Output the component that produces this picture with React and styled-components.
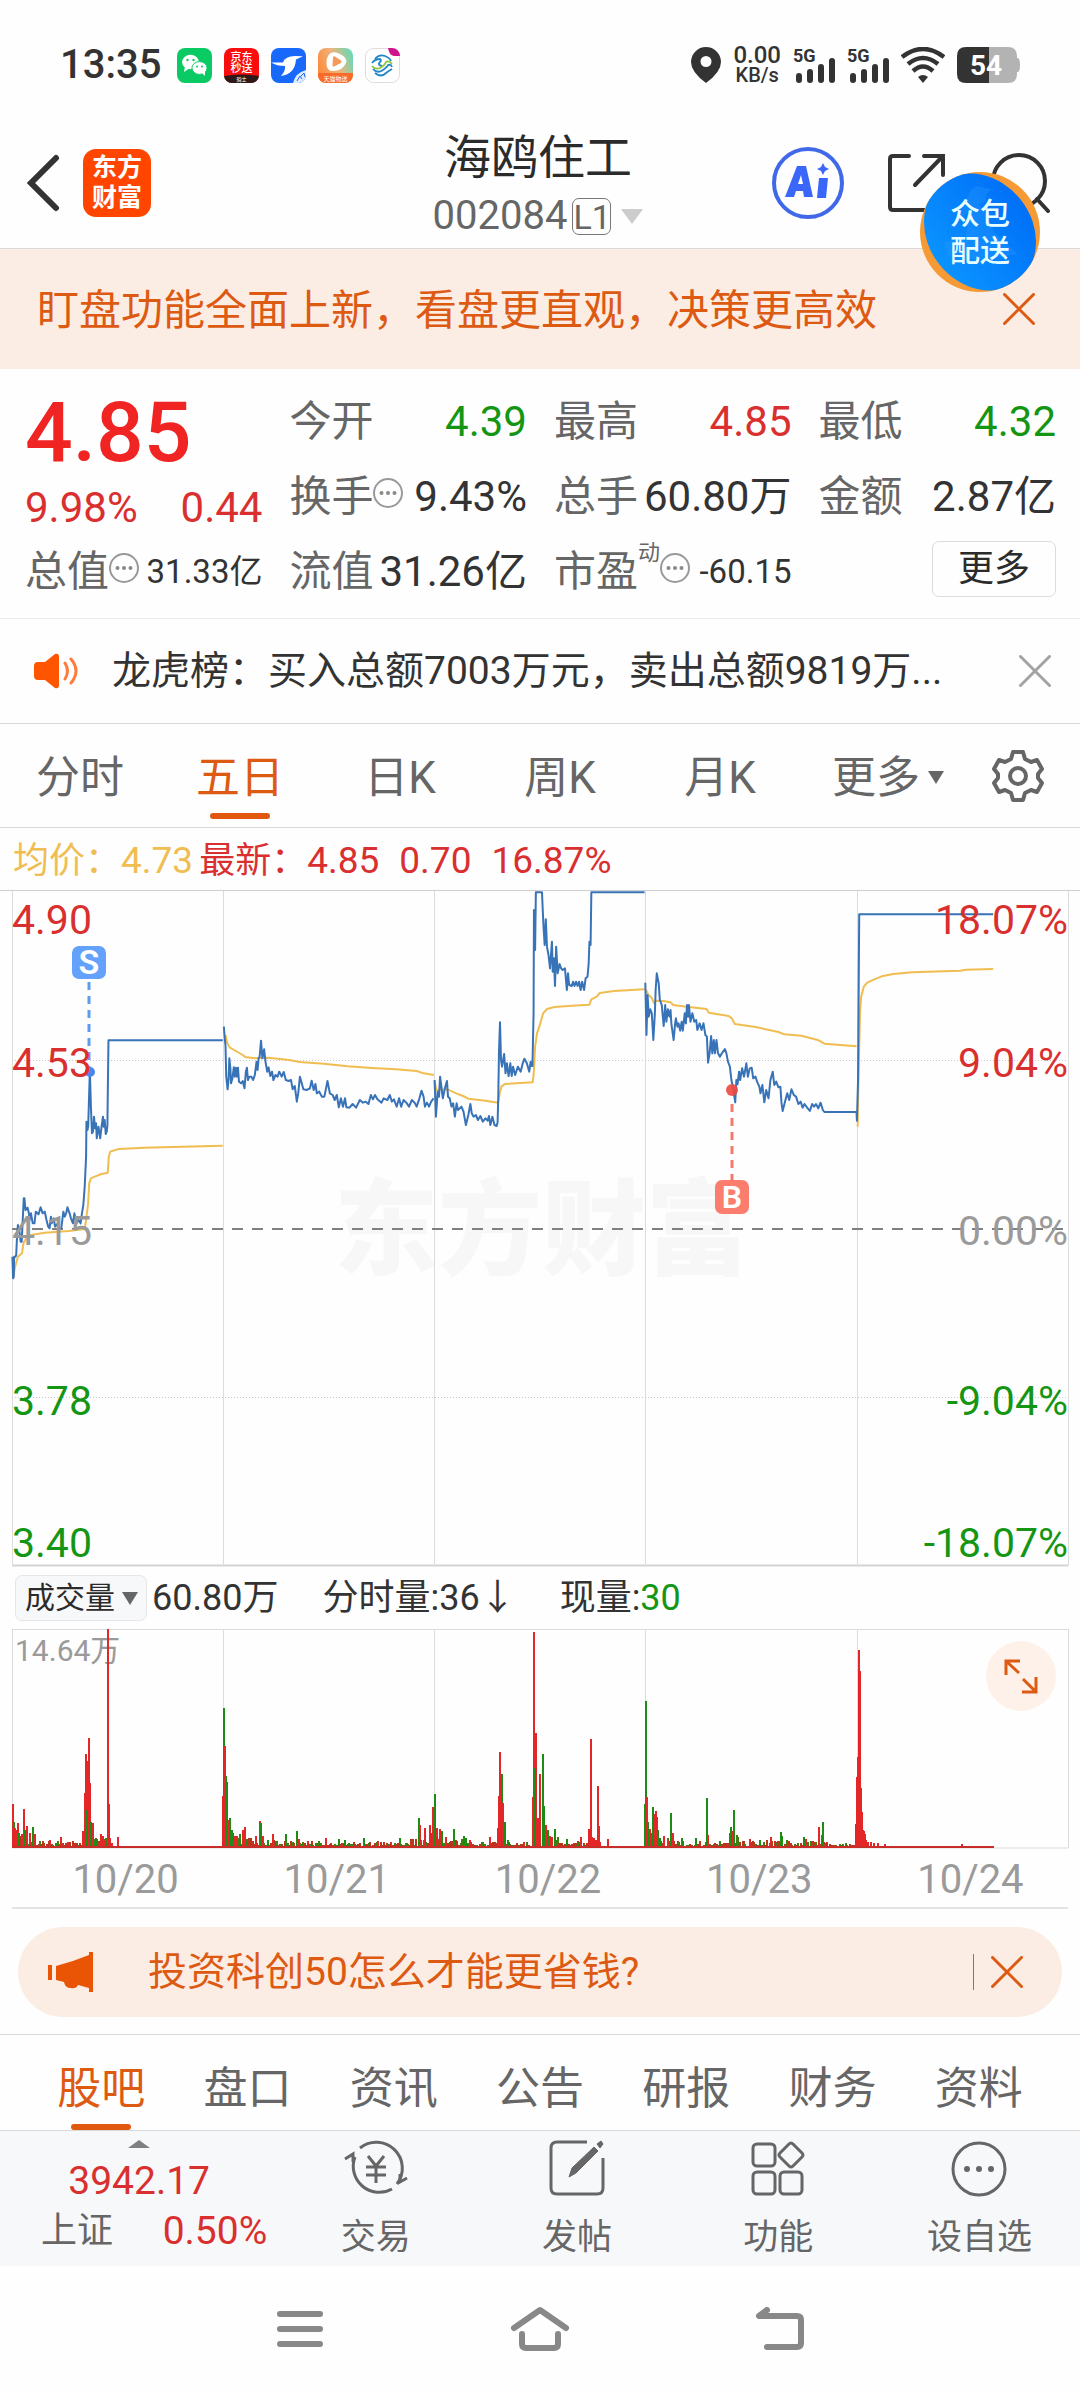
import React from "react";
import styled, { createGlobalStyle } from "styled-components";

const color = {
  ink: "#2b2b2b",
  text: "#333333",
  label: "#666666",
  muted: "#9a9a9a",
  line: "#d9d9d9",
  red: "#d9302f",
  hotRed: "#f12424",
  green: "#149614",
  orange: "#dd5a12",
  peach: "#fcede4",
  gold: "#f0bd50",
  blue: "#3873b8",
};

const tones = { red: color.red, green: color.green, dark: color.text, gold: color.gold };

const GlobalStyle = createGlobalStyle`
  *, *::before, *::after { box-sizing: border-box; }
  body {
    margin: 0;
    background: #fefefe;
    color: ${color.text};
    font-family: Roboto, "Noto Sans CJK SC", sans-serif;
  }
  button, select {
    font: inherit;
    color: inherit;
    background: none;
    border: 0;
    padding: 0;
    margin: 0;
    cursor: pointer;
  }
  a { color: inherit; text-decoration: none; }
  dl, dt, dd, h1, p { margin: 0; font-weight: 400; }
  svg { display: block; }
`;

/* ---------- status bar ---------- */

const StatusBar = styled.div`
  display: flex;
  align-items: center;
  height: 122px;
  padding: 8px 60px 0 60px;
`;

const Clock = styled.time`
  font-size: 40px;
  line-height: 48px;
  font-weight: 500;
  margin-right: 16px;
`;

const AppIcons = styled.div`
  display: flex;
  gap: 12px;
  flex: 1;
`;

const StatusRight = styled.div`
  display: flex;
  align-items: center;
  gap: 12px;
`;

const NetSpeed = styled.div`
  display: flex;
  flex-direction: column;
  align-items: center;
  font-size: 24px;
  line-height: 20px;
  font-weight: 500;
  span + span { font-size: 20px; }
`;

/* ---------- header ---------- */

const Header = styled.header`
  position: relative;
  display: grid;
  grid-template-columns: 1fr auto 1fr;
  align-items: center;
  height: 127px;
  padding: 0 30px 10px 26px;
  border-bottom: 1px solid ${color.line};
`;

const HeaderLeft = styled.div`
  display: flex;
  align-items: center;
  gap: 23px;
`;

const HeaderRight = styled.div`
  display: flex;
  align-items: center;
  justify-content: flex-end;
  gap: 43px;
`;

const IconButton = styled.button`
  display: flex;
  align-items: center;
  justify-content: center;
`;

const Brand = styled.div`
  display: grid;
  place-content: center;
  width: 68px;
  height: 68px;
  border-radius: 13px;
  background: #ff4500;
  color: #fff;
  font-size: 25px;
  line-height: 30px;
  font-weight: 700;
  text-align: center;
`;

const TitleBlock = styled.div`
  align-self: start;
  padding-top: 6px;
  display: flex;
  flex-direction: column;
  align-items: center;
`;

const StockName = styled.h1`
  font-size: 47px;
  line-height: 60px;
  color: ${color.ink};
`;

const StockCode = styled.button`
  display: flex;
  align-items: center;
  font-size: 40px;
  line-height: 56px;
  color: ${color.label};
`;

const Level = styled.span`
  margin: 0 10px 0 5px;
  width: 39px;
  height: 37px;
  border: 1px solid #777;
  border-radius: 7px;
  font-size: 34px;
  line-height: 36px;
`;

const Caret = styled.span`
  width: 0;
  height: 0;
  border: ${(p) => p.$size}px solid transparent;
  border-bottom-width: 0;
  border-top: ${(p) => p.$rise}px solid ${(p) => p.$fill};
`;

const FloatingBadge = styled.button`
  position: absolute;
  top: 50px;
  right: 40px;
  z-index: 2;
  width: 120px;
  height: 120px;
  border-radius: 50%;
  background: #f59a35;
  display: grid;
  place-content: center;
  color: #e8ffff;
  font-size: 30px;
  line-height: 37px;
  font-weight: 500;
  overflow: hidden;
  svg { position: absolute; inset: 0; }
  span { position: relative; }
`;

/* ---------- notice banner ---------- */

const Notice = styled.aside`
  display: flex;
  align-items: center;
  justify-content: space-between;
  height: 120px;
  padding: 0 45px 0 37px;
  background: ${color.peach};
  color: ${color.orange};
  font-size: 42px;
  line-height: 60px;
  span { padding-top: 3px; }
`;

/* ---------- quote ---------- */

const Quote = styled.section`
  display: grid;
  grid-template-columns: minmax(0, 237fr) minmax(0, 765fr);
  column-gap: 27px;
  padding: 15px 24px 9px 25px;
  border-bottom: 1px solid #ececec;
`;

const PriceColumn = styled.div`
  display: flex;
  flex-direction: column;
`;

const Price = styled.strong`
  font-size: 84px;
  line-height: 98px;
  font-weight: 500;
  color: ${color.hotRed};
`;

const Change = styled.div`
  display: flex;
  justify-content: space-between;
  font-size: 42px;
  line-height: 52px;
  color: ${color.red};
`;

const StatGrid = styled.dl`
  display: grid;
  grid-template-columns: repeat(3, minmax(0, 1fr));
  grid-auto-rows: 75px;
  column-gap: 27px;
`;

const Stat = styled.div`
  display: flex;
  align-items: center;
  justify-content: space-between;
  height: 75px;
  white-space: nowrap;
  dt {
    display: flex;
    align-items: center;
    font-size: 42px;
    line-height: 60px;
    color: ${color.label};
  }
  dt svg { margin-bottom: 8px; }
`;

const StatValue = styled.dd`
  font-size: ${(p) => (p.$small ? 33 : 42)}px;
  line-height: 60px;
  color: ${(p) => tones[p.$tone || "dark"]};
`;

const Sup = styled.span`
  align-self: flex-start;
  font-size: 22px;
  line-height: 22px;
`;

const MoreCell = styled.div`
  display: flex;
  align-items: center;
  justify-content: flex-end;
`;

const MoreButton = styled.button`
  width: 124px;
  height: 56px;
  margin-bottom: 6px;
  border: 1px solid #dcdcdc;
  border-radius: 7px;
  font-size: 36px;
  line-height: 50px;
  color: ${color.ink};
`;

/* ---------- news ---------- */

const News = styled.section`
  display: flex;
  align-items: center;
  height: 105px;
  padding: 0 29px 0 33px;
  border-bottom: 1px solid ${color.line};
`;

const NewsLink = styled.a`
  flex: 1;
  padding-left: 33px;
  font-size: 39px;
  line-height: 56px;
  white-space: nowrap;
`;

/* ---------- tab rows ---------- */

const PeriodTabs = styled.nav`
  display: grid;
  grid-template-columns: repeat(5, 160fr) 176fr 84fr;
  height: 104px;
  padding-right: 20px;
  border-bottom: 1px solid ${color.line};
`;

const SectionTabs = styled.nav`
  display: grid;
  grid-template-columns: repeat(7, 1fr);
  height: 97px;
  padding: 0 28px;
  border-top: 1px solid ${color.line};
  border-bottom: 1px solid ${color.line};
`;

const Tab = styled.button`
  display: flex;
  align-items: center;
  justify-content: center;
  position: relative;
  gap: 8px;
  padding-top: ${(p) => p.$drop}px;
  font-size: 44px;
  line-height: 60px;
  color: ${(p) => (p.$active ? color.orange : color.label)};
  &::after {
    content: "";
    display: ${(p) => (p.$active ? "block" : "none")};
    position: absolute;
    bottom: ${(p) => p.$bar || 0}px;
    width: 60px;
    height: 6px;
    border-radius: 3px;
    background: #e0590f;
  }
`;

/* ---------- charts ---------- */

const Legend = styled.p`
  display: flex;
  align-items: center;
  height: 62px;
  padding: 4px 13px 0;
  font-size: 37px;
  line-height: 56px;
  small { font-size: 36px; }
`;

const LegendItem = styled.span`
  color: ${(p) => tones[p.$tone]};
  margin-right: ${(p) => p.$gap}px;
`;

const ChartBox = styled.div`
  position: relative;
  svg { width: 100%; }
`;

const AxisLabel = styled.span`
  position: absolute;
  top: ${(p) => p.$top}px;
  ${(p) => (p.$right ? "right: 12px;" : "left: 12px;")}
  font-size: 41px;
  line-height: 50px;
  color: ${(p) => p.$fill};
`;

const Watermark = styled.div`
  position: absolute;
  top: 282px;
  left: 4px;
  right: 0;
  z-index: -1;
  text-align: center;
  font-size: 104px;
  line-height: 120px;
  font-weight: 900;
  color: #f7f7f7;
`;

const VolumeBar = styled.div`
  display: flex;
  align-items: center;
  height: 62px;
  padding-left: 15px;
  font-size: 36px;
  line-height: 50px;
`;

const SelectWrap = styled.label`
  position: relative;
  display: flex;
  align-items: center;
  margin-right: 5px;
  ${Caret} {
    position: absolute;
    right: 9px;
    pointer-events: none;
  }
  select {
    appearance: none;
    width: 132px;
    height: 46px;
    padding: 0 32px 0 9px;
    border: 1px solid #e6e6e6;
    border-radius: 7px;
    background: #f7f8fa;
    font-size: 30px;
    line-height: 42px;
    color: ${color.ink};
  }
`;

const VolumeItem = styled.span`
  margin-right: ${(p) => p.$gap || 0}px;
  em { font-style: normal; color: ${color.green}; }
`;

const PeakLabel = styled.span`
  position: absolute;
  top: 2px;
  left: 15px;
  font-size: 30px;
  line-height: 40px;
  color: ${color.muted};
  z-index: -1;
`;

const ExpandButton = styled.button`
  position: absolute;
  top: 12px;
  right: 24px;
  width: 70px;
  height: 70px;
  border-radius: 50%;
  background: #fef1ea;
  display: grid;
  place-content: center;
  svg { width: 36px; }
`;

const Dates = styled.div`
  display: grid;
  grid-template-columns: repeat(5, 1fr);
  height: 60px;
  margin: 0 12px;
  border-bottom: 2px solid #e3e3e3;
  text-align: center;
  font-size: 40px;
  line-height: 62px;
  color: ${color.muted};
  span { padding-left: 16px; }
`;

/* ---------- promo ---------- */

const Promo = styled.aside`
  display: flex;
  align-items: center;
  height: 90px;
  margin: 18px 18px 17px;
  padding: 0 39px 0 30px;
  border-radius: 45px;
  background: ${color.peach};
  color: ${color.orange};
  a {
    flex: 1;
    padding-left: 54px;
    font-size: 39px;
    line-height: 56px;
  }
`;

const Divider = styled.span`
  width: 1px;
  height: 36px;
  margin-right: 17px;
  background: ${color.orange};
`;

/* ---------- bottom bars ---------- */

const BottomBar = styled.nav`
  display: grid;
  grid-template-columns: 275fr repeat(4, 201fr);
  height: 135px;
  background: #f7f8fa;
`;

const IndexCell = styled.button`
  display: flex;
  flex-direction: column;
  align-items: center;
  padding: 9px 8px 0 41px;
  font-size: 39px;
  line-height: 50px;
  color: ${color.red};
`;

const UpCaret = styled.span`
  width: 0;
  height: 0;
  margin-bottom: 8px;
  margin-right: 30px;
  border: 11px solid transparent;
  border-top-width: 0;
  border-bottom: 8px solid #808080;
`;

const IndexValue = styled.span`
  margin-right: 30px;
`;

const IndexRow = styled.span`
  display: flex;
  align-self: stretch;
  justify-content: space-between;
  small { font-size: 36px; color: ${color.label}; }
`;

const Action = styled.button`
  display: flex;
  flex-direction: column;
  align-items: center;
  padding-top: 9px;
  font-size: 35px;
  line-height: 48px;
  color: ${color.label};
  gap: 16px;
`;

const SystemNav = styled.nav`
  display: grid;
  grid-template-columns: repeat(3, 240px);
  justify-content: center;
  height: 126px;
`;

/* ---------- icons ---------- */

const Cross = ({ stroke, width = 3 }) => (
  <svg width="32" height="32" viewBox="0 0 32 32" fill="none" stroke={stroke} strokeWidth={width} strokeLinecap="round">
    <path d="M1.500 1.500 L30.500 30.500 M30.500 1.500 L1.500 30.500" />
  </svg>
);

const Dots = () => (
  <svg width="30" height="30" viewBox="0 0 30 30" fill="none" stroke="#999" strokeWidth="2">
    <circle cx="15" cy="15" r="14" />
    <g fill="#8a8a8a" stroke="none">
      <circle cx="8.500" cy="15" r="2" />
      <circle cx="15" cy="15" r="2" />
      <circle cx="21.500" cy="15" r="2" />
    </g>
  </svg>
);

const WeChatIcon = () => (
  <svg width="35" height="35" viewBox="0 0 35 35">
    <rect width="35" height="35" rx="8" fill="#0acb63" />
    <g fill="#fff">
      <ellipse cx="13.500" cy="14" rx="8.500" ry="7.200" />
      <path d="M8 18 L7 24 L13 20 Z" />
      <ellipse cx="22.500" cy="20" rx="7.600" ry="6.400" stroke="#0acb63" />
      <path d="M25 25 L28 28 L28 22 Z" />
    </g>
    <g fill="#0acb63">
      <circle cx="10.500" cy="12" r="1.200" />
      <circle cx="16.500" cy="12" r="1.200" />
      <circle cx="20" cy="18.500" r="1" />
      <circle cx="25" cy="18.500" r="1" />
    </g>
  </svg>
);

const CourierIcon = () => (
  <svg width="35" height="35" viewBox="0 0 35 35">
    <rect width="35" height="35" rx="8" fill="#fb0d0d" />
    <path d="M0 28 Q17 25 35 28 A8 8 0 0 1 27 35 H8 A8 8 0 0 1 0 28Z" fill="#2b1a18" />
    <g fill="#fff" textAnchor="middle" fontWeight="500">
      <text x="17.500" y="13" fontSize="11">京东</text>
      <text x="17.500" y="24" fontSize="11">秒送</text>
      <text x="17.500" y="33" fontSize="5">骑士</text>
    </g>
  </svg>
);

const BirdIcon = () => (
  <svg width="35" height="35" viewBox="0 0 35 35">
    <rect width="35" height="35" rx="8" fill="#1868fb" />
    <path d="M0 14.500 H12 Q14 8 24 8 L32 8.300 L25 11.500 Q24 26 10 28 Q15 22 14 18 Q6 18 0 14.500Z" fill="#fff" />
    <path d="M35 22 V27 A8 8 0 0 1 27 35 H22 Q24 25 35 22Z" fill="#dcebff" />
    <path d="M26 33 L29 28 L31 31 M30 28 L33 25 L34 29" fill="none" stroke="#1868fb" />
  </svg>
);

const VideoIcon = () => (
  <svg width="35" height="35" viewBox="0 0 35 35">
    <defs>
      <linearGradient id="video" x1="0" y1=".6" x2="1" y2=".2">
        <stop offset="0" stopColor="#fb8b3c" />
        <stop offset=".5" stopColor="#f0b27a" />
        <stop offset="1" stopColor="#63dcb8" />
      </linearGradient>
    </defs>
    <rect width="35" height="35" rx="8" fill="url(#video)" />
    <path d="M0 25 H35 V27 A8 8 0 0 1 27 35 H8 A8 8 0 0 1 0 27Z" fill="#fa6a2a" />
    <path d="M13 5 Q17 3 22 6 Q30 10 28 15 Q25 22 16 23 Q9 24 8.500 16 Q8 8 13 5Z" fill="#fff" />
    <path d="M15 9 Q16 8 17 8.500 L23 12.500 Q24 14 23 15 L16 18.500 Q14.500 19 14.500 17Z" fill="#f59a58" />
    <text x="17.500" y="33" fontSize="6" fill="#fff" textAnchor="middle">天猫物送</text>
  </svg>
);

const CarrierIcon = () => (
  <svg width="35" height="35" viewBox="0 0 35 35" fill="none">
    <rect x=".5" y=".5" width="34" height="34" rx="8" fill="#fff" stroke="#ddd" />
    <path d="M23 0 H27 A8 8 0 0 1 35 8 H29 Q24 7 23 0Z" fill="#d0148c" />
    <g strokeWidth="1.800">
      <path d="M10 11 Q14 6 20 8 Q25 10 26 13" stroke="#1e88c8" />
      <path d="M7 15 Q10 11 15 11 Q17 12 15 14 Q12 17 17 18" stroke="#1e88c8" />
      <path d="M7 18 Q10 22 15 20 Q20 17 21 14 Q24 12 27 16" stroke="#8cc63f" />
      <path d="M8 21 Q12 26 18 22 Q23 18 23 17 Q26 16 27 19" stroke="#1e88c8" />
      <path d="M10 25 Q16 30 21 25 Q25 22 27 21" stroke="#1e88c8" />
    </g>
  </svg>
);

const Signal = () => (
  <svg width="42" height="40" viewBox="0 0 42 40" fill="#333">
    <text x="0" y="17" fontSize="18" fontWeight="700">5G</text>
    <rect x="3" y="28" width="6" height="10" rx="3" />
    <rect x="14" y="24" width="6" height="14" rx="3" />
    <rect x="25" y="19" width="6" height="19" rx="3" />
    <rect x="36" y="13" width="6" height="25" rx="3" />
  </svg>
);

const Pin = () => (
  <svg width="30" height="36" viewBox="0 0 30 36">
    <path d="M15 0 A15 15 0 0 1 30 15 Q30 25 15 36 Q0 25 0 15 A15 15 0 0 1 15 0Z M15 9 A5.500 5.500 0 1 0 15 20 A5.500 5.500 0 1 0 15 9Z" fill="#333" fillRule="evenodd" />
  </svg>
);

const Wifi = () => (
  <svg width="44" height="36" viewBox="0 0 44 36" fill="none" stroke="#333" strokeWidth="4.500">
    <path d="M1 10 Q22 -6 43 10" />
    <path d="M7 17 Q22 5 37 17" />
    <path d="M12 24 Q22 15 32 24" />
    <path d="M17 30 Q22 26 27 30 L22 36Z" fill="#333" stroke="none" />
  </svg>
);

const Battery = () => (
  <svg width="63" height="36" viewBox="0 0 63 36">
    <path d="M59 11 H61 Q63 12 63 18 Q63 24 61 25 H59Z" fill="#b3b3b3" />
    <path d="M32 0 H51 Q60 0 60 9 V27 Q60 36 51 36 H32Z" fill="#b3b3b3" />
    <path d="M32 0 H9 Q0 0 0 9 V27 Q0 36 9 36 H32Z" fill="#333" />
    <text x="29" y="28" fontSize="28" fontWeight="700" fill="#fff" textAnchor="middle">54</text>
  </svg>
);

/* ---------- chart data ---------- */

const priceLeft = [
  "36,1130 38,1195 40,1190 41,1130 45,1130 47,1125 50,1060 52,1035 56,1050 60,1085 63,1085 66,1020 69,955 71,955 74,990 80,983 84,1000 86,1020 90,1000 95,1030 100,1030 104,995 112,1003 118,982 124,1000 130,995 135,1020 140,1040 144,1045 148,1010 150,1030 156,1015 160,1040 168,1030 172,1045 178,1045 184,995 188,1010 192,1000 196,982 202,1000 206,1015 212,1030 216,1000 222,1030 228,1020 234,1030 238,1000 242,975 246,920 250,830 251,725 254,750 256,740 259,640 261,570 264,680 267,760 270,755 273,710 276,745 279,730 281,775 286,740 291,775 295,740 299,710 301,740 304,720 307,762 310,755 312,735 313,640 315,481 647,481",
  "650,440 652,465 655,500 657,590 661,628 664,595 666,535 669,565 671,610 675,595 679,562 682,590 685,563 688,590 691,563 694,605 700,610 705,603 710,625 714,575 717,563 720,600 724,590 730,590 735,600 740,585 745,545 748,570 751,535 754,530 758,482 762,535 767,508 771,545 776,575 780,562 785,588 790,575 794,600 800,585 806,590 811,575 818,590 824,576 830,600 838,603 845,600 850,628 856,618 862,665 866,640 871,590 875,605 881,628 890,630 900,625 905,602 911,630 916,612 920,640 927,635 935,650 942,650 951,603 958,640 966,645 972,660 978,645 984,682 990,655 996,680 1002,655 1006,682 1015,683 1024,672 1034,683 1045,660 1054,668 1062,665 1070,672 1077,645 1083,658 1089,645 1096,658 1108,668 1114,655 1125,660 1132,645 1138,665 1144,658 1152,680 1159,655 1165,680 1172,660 1180,668 1188,680 1196,660 1204,668 1210,680 1218,655 1224,632 1230,650 1234,680 1240,668 1246,680 1252,665 1259,655",
  "1262,600 1266,710 1271,635 1275,650 1278,590 1283,630 1286,655 1292,625 1298,603 1301,650 1306,655 1311,680 1316,670 1321,710 1326,670 1330,690 1340,680 1346,695 1353,735 1360,705 1366,672 1370,700 1375,710 1382,705 1388,720 1395,708 1402,725 1410,715 1416,722 1420,708 1424,735 1430,710 1436,735 1442,738 1445,728 1447,650 1449,520 1452,427 1455,540 1458,560 1464,522 1468,580 1472,550 1477,588 1482,550 1486,588 1490,560 1496,585 1504,560 1512,575 1518,550 1523,536 1530,550 1537,575 1541,545 1546,560",
];
const priceRight = [
  "137,560 140,400 141,90 144,210 146,37 162,37 164,90 166,140 169,195 172,118 175,200 179,225 183,265 188,185 190,275 193,235 196,318 199,200 203,280 208,252 212,265 216,270 222,265 227,330 230,280 233,315 240,318 243,305 247,318 251,305 255,318 259,305 263,330 267,305 272,330 276,295 281,290 284,250 286,185 289,195 291,37 430,37",
  "432,308 435,465 438,345 441,410 445,388 449,400 453,480 457,400 459,330 462,280 467,310 470,360 475,375 480,438 484,375 487,425 491,388 495,410 498,390 500,430 506,480 510,430 512,415 516,440 519,430 523,452 527,425 530,452 535,400 538,430 541,375 544,410 546,375 550,425 555,400 560,425 565,420 568,450 574,430 579,450 584,430 589,465 593,470 596,548 600,520 604,468 607,520 611,480 614,520 618,480 622,520 627,530 632,520 640,507 644,520 648,545 653,560 657,600 662,628 667,667 670,600 673,613 677,575 680,600 685,565 690,590 696,550 700,590 705,565 710,563 714,595 720,590 724,605 730,620 733,640 738,615 743,667 748,630 754,655 759,600 765,575 769,615 774,605 780,622 785,620 788,670 791,693 797,665 803,640 808,660 814,628 820,645 826,650 832,672 838,665 843,683 848,672 855,683 862,693 868,672 873,680 878,672 884,685 890,668 896,690 900,696 984,696 985,722 988,600 991,103 1341,103",
];
const averageLeft = [
  "38,1195 44,1160 52,1130 64,1120 68,1090 76,1075 90,1065 130,1058 200,1053 246,1047 250,1020 256,970 259,910 264,895 275,890 295,882 313,878 316,830 320,815 345,807 420,803 530,800 647,797",
  "655,465 660,490 668,503 685,513 705,525 712,531 740,535 780,533 840,540 870,546 940,551 1010,559 1080,564 1150,568 1210,573 1230,580 1260,585",
  "1262,603 1267,630 1300,628 1325,640 1345,648 1360,656 1410,662 1447,668 1451,640 1456,620 1466,612 1548,607",
];
const averageRight = [
  "138,607 141,570 144,500 149,460 155,440 160,420 165,400 175,387 195,381 240,377 286,374 291,358 305,350 313,339 350,333 430,328",
  "434,330 440,345 448,352 455,370 460,362 480,363 498,367 505,375 540,380 592,387 598,398 650,408 658,415 666,432 720,441 780,456 795,463 840,467 885,481 900,491 984,499",
  "987,740 989,600 993,400 996,350 1003,320 1012,308 1030,298 1050,289 1080,282 1130,277 1255,272 1270,269 1341,267",
];

/* Each entry is "x height side": r = buying, g = selling. */
const spikes = `
13 44 r,14 26 g,15 20 r,16 18 r,18 25 r,19 15 g,22 14 r,24 39 r,25 18 g,27 22 r,30 15 r,33 21 g,35 14 r,50 8 r,61 11 r,68 6 r,
83 17 r,85 55 r,86 94 r,88 87 r,87 38 g,89 110 r,90 65 r,91 26 g,92 18 g,93 25 r,95 9 g,97 9 g,101 14 r,103 12 r,105 8 r,108 219 r,109 44 r,110 10 r,112 5 r,118 11 r,
223 52 r,224 140 g,225 102 r,226 72 g,227 66 g,228 28 r,230 30 g,232 18 g,235 12 r,237 12 r,240 14 g,243 18 r,245 21 r,256 12 r,260 27 r,261 25 g,263 12 r,268 8 g,273 14 r,286 14 g,297 17 g,299 9 r,308 7 r,326 10 r,339 9 g,345 8 g,364 10 g,378 7 r,391 6 r,400 10 g,419 30 g,420 23 r,425 20 r,430 23 r,432 15 g,433 41 r,
435 54 g,437 20 r,440 19 r,442 17 g,446 10 r,454 19 g,464 12 g,466 10 g,470 8 r,490 11 r,498 20 r,499 52 r,500 96 r,502 74 g,503 45 r,504 15 g,505 26 g,508 8 g,524 6 r,533 51 r,534 216 r,536 115 r,535 80 g,537 30 r,538 30 r,540 74 r,
543 94 g,544 42 g,546 23 r,548 18 g,550 12 r,552 10 r,555 19 g,567 9 g,581 11 r,589 19 r,591 109 r,592 11 r,594 10 r,596 8 r,598 62 r,599 22 r,600 6 r,608 9 r,
645 44 g,646 147 g,647 51 r,648 26 g,650 19 r,652 15 g,653 41 g,655 34 r,656 37 r,657 31 r,658 18 g,660 10 g,664 12 r,668 8 r,671 35 g,673 15 r,682 10 g,696 10 g,707 50 g,708 13 r,730 15 g,731 21 g,733 17 r,734 38 g,750 9 r,760 8 g,771 11 r,781 16 g,782 12 g,804 11 g,806 9 r,819 21 r,822 13 r,823 26 g,
856 24 g,857 71 r,858 91 r,859 198 r,860 177 r,861 60 r,862 36 r,863 18 r,864 17 r,865 14 r,866 8 r,868 6 r,871 6 r,874 5 r,878 5 r,885 4 r,962 4 r`
  .split(",")
  .map((entry) => {
    const [x, h, side] = entry.trim().split(" ");
    return { x: Number(x), h: Number(h), fill: side === "r" ? "#e32728" : "#1c8c14" };
  });

/* Background trading between the spikes: [from, to, largest bar]. */
const quiet = [
  [13, 40, 14], [40, 82, 5], [92, 108, 8], [224, 240, 14], [240, 276, 8], [276, 345, 5], [345, 410, 4],
  [410, 434, 8], [436, 470, 9], [470, 500, 5], [506, 530, 5], [544, 562, 10], [562, 600, 5], [648, 672, 12],
  [672, 730, 6], [730, 740, 13], [740, 790, 6], [790, 830, 5], [830, 856, 3],
].flatMap(([from, to, max], band) => {
  const bars = [];
  let seed = 17 + band * 31;
  for (let x = from; x < to; x += 1) {
    seed = (seed * 1103 + 12345) % 65536;
    const level = seed / 65536;
    bars.push({ x, h: 2 + Math.round(level * level * max), fill: seed % 5 < 3 ? "#b9361c" : "#3f7f12" });
  }
  return bars;
});

const gridX = [12, 223, 434, 645, 857, 1068];

const Lines = ({ list, stroke }) =>
  list.map((points) => (
    <polyline key={points.slice(0, 12)} points={points} fill="none" stroke={stroke} strokeWidth="2" strokeLinejoin="round" vectorEffect="non-scaling-stroke" />
  ));

const leftHalf = "translate(0 -10) scale(.34435 .33333)";
const rightHalf = "translate(480 -10) scale(.38265 .33333)";

const PriceChart = () => (
  <svg height="677" viewBox="0 0 1080 677" preserveAspectRatio="none">
    <g stroke="#dcdcdc" strokeWidth="1">
      <path d="M0 .5 H1080" stroke="#cfcfcf" />
      <path d="M12 675.500 H1068" strokeWidth="2" stroke="#d4d4d4" />
      {gridX.map((x) => <path key={x} d={`M${x}.5 1 V676`} />)}
      <path d="M12 170.500 H1068 M12 507.500 H1068" stroke="#c8c8c8" strokeDasharray="1 2" />
      <path d="M12 339 H1068" stroke="#808080" strokeWidth="2" strokeDasharray="11 9" />
    </g>
    <g transform={leftHalf}><Lines list={averageLeft} stroke={color.gold} /></g>
    <g transform={rightHalf}><Lines list={averageRight} stroke={color.gold} /></g>
    <g transform={leftHalf}><Lines list={priceLeft} stroke={color.blue} /></g>
    <g transform={rightHalf}><Lines list={priceRight} stroke={color.blue} /></g>
    <path d="M89 92 V178" stroke="#5d9bf0" strokeWidth="3" strokeDasharray="8 6" />
    <circle cx="90" cy="182" r="5" fill="#4a86ec" />
    <rect x="72" y="56" width="34" height="33" rx="7" fill="#64a1fa" />
    <text x="89" y="84" fontSize="34" fontWeight="600" fill="#fff" textAnchor="middle">S</text>
    <path d="M732 214 V290" stroke="#f47a6c" strokeWidth="3" strokeDasharray="8 6" />
    <circle cx="732" cy="200" r="6" fill="#f0483f" fillOpacity=".9" />
    <rect x="715" y="290" width="34" height="34" rx="7" fill="#fb7d6e" />
    <text x="732" y="318" fontSize="32" fontWeight="600" fill="#fff" textAnchor="middle">B</text>
  </svg>
);

const VolumeChart = () => (
  <svg height="220" viewBox="0 0 1080 220" preserveAspectRatio="none">
    <g stroke="#dcdcdc">
      <path d="M12 .5 H1068 M12 219 H1068" />
      {gridX.map((x) => <path key={x} d={`M${x}.5 0 V219`} />)}
    </g>
    {[...quiet, ...spikes].map((bar, i) => (
      <rect key={i} x={bar.x - 1} y={219 - bar.h} width="2" height={bar.h} fill={bar.fill} />
    ))}
    <path d="M12 218 H994" stroke="#c92d2a" strokeWidth="2" />
  </svg>
);

const axis = [
  { top: 5, price: "4.90", percent: "18.07%", fill: color.red },
  { top: 148, price: "4.53", percent: "9.04%", fill: color.red },
  { top: 316, price: "4.15", percent: "0.00%", fill: color.muted },
  { top: 486, price: "3.78", percent: "-9.04%", fill: color.green },
  { top: 628, price: "3.40", percent: "-18.07%", fill: color.green },
];

const stats = [
  { label: "今开", value: "4.39", tone: "green" },
  { label: "最高", value: "4.85", tone: "red" },
  { label: "最低", value: "4.32", tone: "green" },
  { label: "换手", value: "9.43%", info: true },
  { label: "总手", value: "60.80万" },
  { label: "金额", value: "2.87亿" },
  { label: "流值", value: "31.26亿" },
  { label: "市盈", value: "-60.15", small: true, info: true, sup: "动" },
];

const StatItem = ({ label, value, tone, small, info, sup }) => (
  <Stat>
    <dt>
      {label}
      {sup && <Sup>{sup}</Sup>}
      {info && <Dots />}
    </dt>
    <StatValue $tone={tone} $small={small}>{value}</StatValue>
  </Stat>
);

const actionIcons = {
  交易: (
    <>
      <path d="M14 8 A26 26 0 0 1 51 44 M46 49 A26 26 0 0 1 9 17" transform="translate(2 0)" />
      <path d="M1 19 L9 14 V22 M63 38 L56 42 V34" />
      <path d="M24 16 L32 26 L40 16 M32 26 V43 M22 27 H42 M22 35 H42" />
    </>
  ),
  发帖: (
    <>
      <path d="M42 2 H12 Q6 2 6 8 V48 Q6 54 12 54 H52 Q58 54 58 48 V18" />
      <path d="M24 37 L27 28 L49 7 L53 11 L31 33Z M52 4 L56 1 L58 4 L55 8Z" fill="#666" strokeWidth="1" />
    </>
  ),
  功能: (
    <>
      <rect x="7" y="4" width="22" height="22" rx="4" />
      <rect x="7" y="32" width="22" height="22" rx="4" />
      <rect x="34" y="32" width="22" height="22" rx="4" />
      <path d="M43 4 Q45 2 47 4 L56 13 Q58 15 56 17 L47 26 Q45 28 43 26 L34 17 Q32 15 34 13Z" />
    </>
  ),
  设自选: (
    <>
      <circle cx="32" cy="29" r="26" />
      <g fill="#666" stroke="none">
        <circle cx="20" cy="29" r="3" />
        <circle cx="32" cy="29" r="3" />
        <circle cx="44" cy="29" r="3" />
      </g>
    </>
  ),
};

export default function App() {
  return (
    <>
      <GlobalStyle />
      <StatusBar>
        <Clock>13:35</Clock>
        <AppIcons>
          <WeChatIcon />
          <CourierIcon />
          <BirdIcon />
          <VideoIcon />
          <CarrierIcon />
        </AppIcons>
        <StatusRight>
          <Pin />
          <NetSpeed><span>0.00</span><span>KB/s</span></NetSpeed>
          <Signal />
          <Signal />
          <Wifi />
          <Battery />
        </StatusRight>
      </StatusBar>

      <Header>
        <HeaderLeft>
          <IconButton aria-label="返回">
            <svg width="34" height="58" viewBox="0 0 34 58" fill="none" stroke="#333" strokeWidth="6" strokeLinecap="round">
              <path d="M30 4 L5 29 L30 54" strokeLinejoin="miter" />
            </svg>
          </IconButton>
          <Brand>东方<br />财富</Brand>
        </HeaderLeft>
        <TitleBlock>
          <StockName>海鸥住工</StockName>
          <StockCode>
            002084
            <Level>L1</Level>
            <Caret $size={11} $rise={15} $fill="#cccccc" />
          </StockCode>
        </TitleBlock>
        <HeaderRight>
          <IconButton aria-label="Ai">
            <svg width="72" height="72" viewBox="0 0 72 72">
              <circle cx="36" cy="36" r="34" fill="none" stroke="#4068e8" strokeWidth="4" />
              <g fill="#3a66fa">
                <path d="M25 19 H34 L41 50 H32 L31 44 H24 L22 50 H13Z M29 28 L26 37 H31Z" fillRule="evenodd" />
                <path d="M47 31 H56 L54 51 H45Z M51 16 L53 20 L57 22 L53 24 L51 28 L49 24 L45 22 L49 20Z" />
              </g>
            </svg>
          </IconButton>
          <IconButton aria-label="分享">
            <svg width="60" height="60" viewBox="0 0 60 60" fill="none" stroke="#333" strokeWidth="4" strokeLinecap="round">
              <path d="M22 3 H6 Q3 3 3 6 V54 Q3 57 6 57 H54 Q57 57 57 54 V40" />
              <path d="M37 3 H56 V22 M56 3 L28 32" />
            </svg>
          </IconButton>
          <IconButton aria-label="搜索">
            <svg width="60" height="60" viewBox="0 0 60 60" fill="none" stroke="#333" strokeWidth="4" strokeLinecap="round">
              <circle cx="29" cy="28" r="26" />
              <path d="M47 46 L58 58" />
            </svg>
          </IconButton>
        </HeaderRight>
        <FloatingBadge>
          <svg width="120" height="120" viewBox="0 0 120 120">
            <defs>
              <linearGradient id="badge" x1="0" x2="1">
                <stop offset="0" stopColor="#0a93ff" />
                <stop offset="1" stopColor="#0070f8" />
              </linearGradient>
            </defs>
            <ellipse cx="60" cy="60" rx="52" ry="62" transform="rotate(-38 60 60)" fill="url(#badge)" />
            <path d="M48 24 Q54 10 64 16 L72 17 L66 22 Q68 32 58 32 Q70 44 74 60 L98 82 L60 88 L28 84 L24 70 L46 66 L48 40 L30 58Z" fill="#35a0ff" fillOpacity=".25" />
          </svg>
          <span>众包<br />配送</span>
        </FloatingBadge>
      </Header>

      <Notice>
        <span>盯盘功能全面上新，看盘更直观，决策更高效</span>
        <IconButton aria-label="关闭提示"><Cross stroke={color.orange} /></IconButton>
      </Notice>

      <Quote>
        <PriceColumn>
          <Price>4.85</Price>
          <Change><span>9.98%</span><span>0.44</span></Change>
          <dl><StatItem label="总值" value="31.33亿" small info /></dl>
        </PriceColumn>
        <StatGrid>
          {stats.map((s) => <StatItem key={s.label} {...s} />)}
          <MoreCell><MoreButton>更多</MoreButton></MoreCell>
        </StatGrid>
      </Quote>

      <News>
        <svg width="46" height="36" viewBox="0 0 46 36" fill="none" stroke="#ff7a3c" strokeWidth="3" strokeLinecap="round">
          <path d="M22 1 Q26 0 26 4 V32 Q26 36 22 35 L12 27 H5 Q1 27 1 23 V13 Q1 9 5 9 H12Z" fill="#ff5500" stroke="none" />
          <path d="M32 10 Q37 18 32 26 M38 6 Q48 18 38 30" />
        </svg>
        <NewsLink href="#news">龙虎榜：买入总额7003万元，卖出总额9819万...</NewsLink>
        <IconButton aria-label="关闭消息"><Cross stroke="#a3a3a3" /></IconButton>
      </News>

      <PeriodTabs>
        {["分时", "五日", "日K", "周K", "月K"].map((name) => (
          <Tab key={name} $active={name === "五日"} $drop={4} $bar={8}>{name}</Tab>
        ))}
        <Tab $drop={4}>更多<Caret $size={8} $rise={13} $fill="#666666" /></Tab>
        <IconButton aria-label="设置">
          <svg width="52" height="54" viewBox="0 0 52 54" fill="none" stroke="#666" strokeWidth="4" strokeLinejoin="round">
            <path d="M21 3 H31 L33 10 L39 13 L45 11 L50 20 L46 25 V29 L50 34 L45 43 L39 41 L33 44 L31 51 H21 L19 44 L13 41 L7 43 L2 34 L6 29 V25 L2 20 L7 11 L13 13 L19 10Z" />
            <circle cx="26" cy="27" r="8" />
          </svg>
        </IconButton>
      </PeriodTabs>

      <Legend>
        <LegendItem $tone="gold" $gap={6}><small>均价：</small>4.73</LegendItem>
        <LegendItem $tone="red" $gap={20}><small>最新：</small>4.85</LegendItem>
        <LegendItem $tone="red" $gap={20}>0.70</LegendItem>
        <LegendItem $tone="red" $gap={0}>16.87%</LegendItem>
      </Legend>

      <ChartBox>
        <Watermark>东方财富</Watermark>
        <PriceChart />
        {axis.map((a) => (
          <React.Fragment key={a.price}>
            <AxisLabel $top={a.top} $fill={a.fill}>{a.price}</AxisLabel>
            <AxisLabel $top={a.top} $fill={a.fill} $right>{a.percent}</AxisLabel>
          </React.Fragment>
        ))}
      </ChartBox>

      <VolumeBar>
        <SelectWrap>
          <select aria-label="指标" defaultValue="成交量">
            <option>成交量</option>
          </select>
          <Caret $size={8} $rise={13} $fill="#666666" />
        </SelectWrap>
        <VolumeItem $gap={44}>60.80万</VolumeItem>
        <VolumeItem $gap={44}>分时量:36↓</VolumeItem>
        <VolumeItem>现量:<em>30</em></VolumeItem>
      </VolumeBar>

      <ChartBox>
        <PeakLabel>14.64万</PeakLabel>
        <VolumeChart />
        <ExpandButton aria-label="全屏">
          <svg height="36" viewBox="0 0 36 36" fill="none" stroke={color.orange} strokeWidth="3">
            <path d="M3 17 V3 H17 M4 4 L16 15 M33 19 V34 H19 M32 33 L20 21" />
          </svg>
        </ExpandButton>
      </ChartBox>
      <Dates>
        {["10/20", "10/21", "10/22", "10/23", "10/24"].map((d) => <span key={d}>{d}</span>)}
      </Dates>

      <Promo>
        <svg width="46" height="40" viewBox="0 0 46 40" fill="#e95504">
          <path d="M0 13 H4 V28 H0Z M8 14 Q24 10 41 3 V0 H45 V40 H41 V36 L30 33 Q28 37 23 36 Q17 36 16 30 L8 28Z" />
        </svg>
        <a href="#promo">投资科创50怎么才能更省钱?</a>
        <Divider />
        <IconButton aria-label="关闭广告"><Cross stroke={color.orange} /></IconButton>
      </Promo>

      <SectionTabs>
        {["股吧", "盘口", "资讯", "公告", "研报", "财务", "资料"].map((name) => (
          <Tab key={name} $active={name === "股吧"} $drop={12}>{name}</Tab>
        ))}
      </SectionTabs>

      <BottomBar>
        <IndexCell>
          <UpCaret />
          <IndexValue>3942.17</IndexValue>
          <IndexRow><small>上证</small><span>0.50%</span></IndexRow>
        </IndexCell>
        {Object.entries(actionIcons).map(([name, icon]) => (
          <Action key={name}>
            <svg width="64" height="58" viewBox="0 0 64 58" fill="none" stroke="#666" strokeWidth="3">{icon}</svg>
            {name}
          </Action>
        ))}
      </BottomBar>

      <SystemNav>
        <IconButton aria-label="最近任务">
          <svg width="46" height="38" viewBox="0 0 46 38" stroke="#888" strokeWidth="6" strokeLinecap="round">
            <path d="M3 4 H43 M3 19 H43 M3 34 H43" />
          </svg>
        </IconButton>
        <IconButton aria-label="主页">
          <svg width="60" height="46" viewBox="0 0 60 46" fill="none" stroke="#888" strokeWidth="6" strokeLinecap="round" strokeLinejoin="round">
            <path d="M4 22 L30 4 L56 22" />
            <path d="M12 28 V38 Q12 42 16 42 H44 Q48 42 48 38 V28" />
          </svg>
        </IconButton>
        <IconButton aria-label="后退">
          <svg width="50" height="44" viewBox="0 0 50 44" fill="none" stroke="#888" strokeWidth="6" strokeLinecap="round" strokeLinejoin="round">
            <path d="M12 3 L4 9 H42 Q46 9 46 13 V36 Q46 40 42 40 H12" />
          </svg>
        </IconButton>
      </SystemNav>
    </>
  );
}
